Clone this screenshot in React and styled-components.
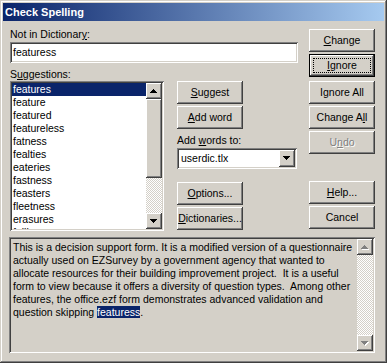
import React from 'react';
import styled, { createGlobalStyle, css } from 'styled-components';

const GlobalStyle = createGlobalStyle`
  html, body {
    margin: 0;
    padding: 0;
    background: #d4d0c8;
  }
  body {
    font-family: "Liberation Sans", Arial, sans-serif;
    font-size: 10.5px;
    color: #000;
  }
`;

const raised = css`
  box-shadow: inset -1px -1px #404040, inset 1px 1px #fff, inset -2px -2px #808080, inset 2px 2px #d4d0c8;
`;

const sunken = css`
  box-shadow: inset 1px 1px #808080, inset -1px -1px #fff, inset 2px 2px #404040, inset -2px -2px #d4d0c8;
`;

const Window = styled.div`
  width: 387px;
  height: 363px;
  box-sizing: border-box;
  padding: 3px;
  background: #d4d0c8;
  box-shadow: inset -1px -1px #404040, inset 1px 1px #d4d0c8, inset -2px -2px #808080, inset 2px 2px #fff;
  display: flex;
  flex-direction: column;
`;

const TitleBar = styled.div`
  height: 18px;
  padding-left: 2px;
  background: linear-gradient(to right, #0a246a, #a6caf0);
  color: #fff;
  font-weight: bold;
  font-size: 11px;
  line-height: 18px;
`;

const Body = styled.div`
  padding: 7px 9px 0 7px;
  display: flex;
  flex-direction: column;
`;

const Top = styled.div`
  display: flex;
`;

const LeftPane = styled.div`
  width: 288px;
  display: flex;
  flex-direction: column;
`;

const Label = styled.div`
  height: 13px;
  line-height: 13px;
  margin-top: ${p => p.$gap || 0}px;
  white-space: nowrap;
`;

const TextInput = styled.div`
  height: 21px;
  margin-top: 1px;
  box-sizing: border-box;
  padding: 0 3px;
  background: #fff;
  line-height: 21px;
  ${sunken}
`;

const ListRow = styled.div`
  display: flex;
`;

const ListBox = styled.div`
  width: 154px;
  height: 150px;
  box-sizing: border-box;
  padding: 2px;
  background: #fff;
  display: flex;
  ${sunken}
`;

const ListItems = styled.ul`
  flex: 1;
  margin: 0;
  padding: 0;
  list-style: none;
  overflow: hidden;
`;

const ListItem = styled.li`
  height: 13px;
  line-height: 13px;
  padding-left: 1px;
  white-space: nowrap;
  ${p => p.$selected && css`
    background: #0a246a;
    color: #fff;
  `}
`;

const ScrollBar = styled.div`
  width: 16px;
  display: flex;
  flex-direction: column;
`;

const ScrollButton = styled.div`
  width: 16px;
  height: 16px;
  flex: none;
  background: #d4d0c8;
  ${raised}
  svg { display: block; }
`;

const Thumb = styled.div`
  height: ${p => p.$size}px;
  flex: none;
  background: #d4d0c8;
  ${raised}
`;

const Track = styled.div`
  flex: 1;
  background: repeating-conic-gradient(#fff 0 25%, #d4d0c8 0 50%) 0 0 / 2px 2px;
`;

const MidColumn = styled.div`
  width: 121px;
  margin-left: 13px;
  display: flex;
  flex-direction: column;
  align-items: flex-start;
`;

const ButtonColumn = styled.div`
  width: 66px;
  margin-left: 11px;
  display: flex;
  flex-direction: column;
`;

const Button = styled.div`
  position: relative;
  width: 66px;
  height: 23px;
  flex: none;
  box-sizing: border-box;
  margin-top: ${p => p.$gap || 0}px;
  background: #d4d0c8;
  text-align: center;
  line-height: 23px;
  white-space: nowrap;
  ${raised}
  ${p => p.$default && css`
    box-shadow: inset 0 0 0 1px #000, inset -2px -2px #404040, inset 2px 2px #fff, inset -3px -3px #808080;
    &::after {
      content: "";
      position: absolute;
      inset: 4px;
      border: 1px dotted #000;
    }
  `}
  ${p => p.$disabled && css`
    color: #808080;
    text-shadow: 1px 1px #fff;
  `}
`;

const Combo = styled.div`
  width: 120px;
  height: 21px;
  margin-top: 1px;
  box-sizing: border-box;
  padding: 2px;
  background: #fff;
  display: flex;
  ${sunken}
`;

const ComboText = styled.div`
  flex: 1;
  padding-left: 2px;
  line-height: 17px;
`;

const ComboButton = styled(ScrollButton)`
  height: 17px;
`;

const TextPanel = styled.div`
  width: 366px;
  height: 116px;
  margin: 6px 0 0 -1px;
  box-sizing: border-box;
  padding: 2px;
  background: #d4d0c8;
  display: flex;
  ${sunken}
`;

const TextBody = styled.div`
  flex: 1;
  padding: 2px 0 0 2px;
  line-height: 13px;
  white-space: pre;
  overflow: hidden;
`;

const Highlight = styled.span`
  background: #0a246a;
  color: #fff;
`;

const Arrow = ({ dir = 'up', disabled }) => {
  const d = dir === 'up'
    ? 'M7 6h1v1h1v1h1v1h1v1H4V9h1V8h1V7h1z'
    : 'M4 6h7v1h-1v1H9v1H8v1H7V9H6V8H5V7H4z';
  return (
    <svg width="16" height="16" viewBox="0 0 16 16" shapeRendering="crispEdges">
      {disabled && <path d={d} fill="#fff" transform="translate(1 1)" />}
      <path d={d} fill={disabled ? '#808080' : '#000'} />
    </svg>
  );
};

const suggestions = [
  'features', 'feature', 'featured', 'featureless', 'fatness', 'fealties',
  'eateries', 'fastness', 'feasters', 'fleetness', 'erasures', 'follies',
];

const passage =
  'This is a decision support form. It is a modified version of a questionnaire\n' +
  'actually used on EZSurvey by a government agency that wanted to\n' +
  'allocate resources for their building improvement project.  It is a useful\n' +
  'form to view because it offers a diversity of question types.  Among other\n' +
  'features, the office.ezf form demonstrates advanced validation and\n' +
  'question skipping ';

const App = () => (
  <>
    <GlobalStyle />
    <Window>
      <TitleBar>Check Spelling</TitleBar>
      <Body>
        <Top>
          <LeftPane>
            <Label>Not in Dictionar<u>y</u>:</Label>
            <TextInput>featuress</TextInput>
            <Label $gap={5}>S<u>u</u>ggestions:</Label>
            <ListRow>
              <ListBox>
                <ListItems>
                  {suggestions.map((word, i) => (
                    <ListItem key={word} $selected={i === 0}>{word}</ListItem>
                  ))}
                </ListItems>
                <ScrollBar>
                  <ScrollButton><Arrow dir="up" /></ScrollButton>
                  <Thumb $size={79} />
                  <Track />
                  <ScrollButton><Arrow dir="down" /></ScrollButton>
                </ScrollBar>
              </ListBox>
              <MidColumn>
                <Button><u>S</u>uggest</Button>
                <Button $gap={2}><u>A</u>dd word</Button>
                <Label $gap={5}>Add <u>w</u>ords to:</Label>
                <Combo>
                  <ComboText>userdic.tlx</ComboText>
                  <ComboButton><Arrow dir="down" /></ComboButton>
                </Combo>
                <Button $gap={13}><u>O</u>ptions...</Button>
                <Button $gap={2}><u>D</u>ictionaries...</Button>
              </MidColumn>
            </ListRow>
          </LeftPane>
          <ButtonColumn>
            <Button $gap={1}><u>C</u>hange</Button>
            <Button $gap={2} $default><u>I</u>gnore</Button>
            <Button $gap={4}>Ignore All</Button>
            <Button $gap={2}>Change A<u>l</u>l</Button>
            <Button $gap={2} $disabled>U<u>n</u>do</Button>
            <Button $gap={27}><u>H</u>elp...</Button>
            <Button $gap={2}>Cancel</Button>
          </ButtonColumn>
        </Top>
        <TextPanel>
          <TextBody>
            {passage}<Highlight>featuress</Highlight>.
          </TextBody>
          <ScrollBar>
            <ScrollButton><Arrow dir="up" disabled /></ScrollButton>
            <Track />
            <ScrollButton><Arrow dir="down" disabled /></ScrollButton>
          </ScrollBar>
        </TextPanel>
      </Body>
    </Window>
  </>
);

export default App;
